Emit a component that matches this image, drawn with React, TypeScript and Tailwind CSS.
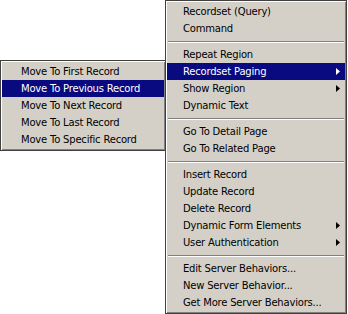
import { Fragment } from "react"

type Item = { label: string; sub?: boolean; active?: boolean } | "sep"

const mainItems: Item[] = [
  { label: "Recordset (Query)" },
  { label: "Command" },
  "sep",
  { label: "Repeat Region" },
  { label: "Recordset Paging", sub: true, active: true },
  { label: "Show Region", sub: true },
  { label: "Dynamic Text" },
  "sep",
  { label: "Go To Detail Page" },
  { label: "Go To Related Page" },
  "sep",
  { label: "Insert Record" },
  { label: "Update Record" },
  { label: "Delete Record" },
  { label: "Dynamic Form Elements", sub: true },
  { label: "User Authentication", sub: true },
  "sep",
  { label: "Edit Server Behaviors..." },
  { label: "New Server Behavior..." },
  { label: "Get More Server Behaviors..." },
]

const pagingItems: Item[] = [
  { label: "Move To First Record" },
  { label: "Move To Previous Record", active: true },
  { label: "Move To Next Record" },
  { label: "Move To Last Record" },
  { label: "Move To Specific Record" },
]

function Arrow({ white }: { white?: boolean }) {
  return (
    <svg width="4" height="7" viewBox="0 0 4 7" className="shrink-0">
      <path d="M0 0 L4 3.5 L0 7 Z" fill={white ? "#ffffff" : "#000000"} />
    </svg>
  )
}

function Menu({ items, indent }: { items: Item[]; indent: string }) {
  return (
    <div className="flex flex-col border border-[#404040] bg-[#d4d0c8] px-px py-[2px] shadow-[inset_1px_1px_0_#ffffff,inset_-1px_-1px_0_#808080]">
      {items.map((it, i) => (
        <Fragment key={i}>
          {it === "sep" ? (
            <div className="flex h-[9px] items-center px-px">
              <div className="h-[2px] w-full border-t border-[#808080] border-b border-b-white" />
            </div>
          ) : (
            <div
              className={`flex h-[17px] items-center justify-between pr-[5px] ${indent} ${
                it.active ? "bg-[#0a0a80] text-white" : "text-black"
              }`}
            >
              <span className="whitespace-nowrap">{it.label}</span>
              {it.sub && <Arrow white={it.active} />}
            </div>
          )}
        </Fragment>
      ))}
    </div>
  )
}

export default function App() {
  return (
    <div className="relative h-[314px] w-[348px] overflow-hidden bg-white font-['DejaVu_Sans',Verdana,sans-serif] text-[10px] leading-none tracking-[-0.2px]">
      {/* main context menu */}
      <div className="absolute left-[165px] top-0 h-[314px] w-[182px]">
        <Menu items={mainItems} indent="pl-[16px]" />
      </div>

      {/* paging submenu */}
      <div className="absolute left-0 top-[60px] w-[166px]">
        <Menu items={pagingItems} indent="pl-[19px]" />
      </div>
    </div>
  )
}
